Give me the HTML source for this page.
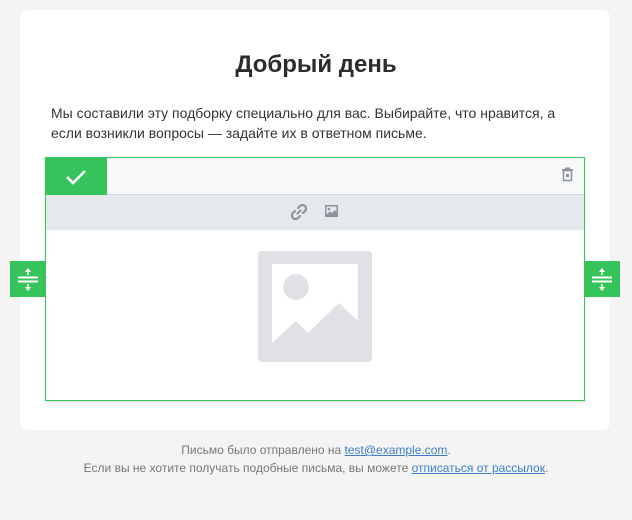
<!DOCTYPE html>
<html><head><meta charset="utf-8"><style>
*{margin:0;padding:0;box-sizing:border-box}
body{width:632px;height:520px;background:#f4f4f4;font-family:"Liberation Sans",Arial,sans-serif;position:relative;overflow:hidden}
.card{position:absolute;left:20px;top:10px;width:590px;height:420px;background:#fff;border-radius:8px}
h1{position:absolute;left:0;width:632px;top:51px;text-align:center;font-size:24px;font-weight:bold;color:#2c2c2c}
.p{position:absolute;left:51px;top:103px;width:515px;font-size:14px;line-height:20px;color:#333}
.blk{position:absolute;left:45px;top:157px;width:540px;height:244px;border:1px solid #37c35c;background:#fff;box-shadow:0 1px 2px rgba(0,0,0,.15)}
.hd{position:absolute;left:0;top:0;width:538px;height:37px;background:#f7f8fa;border-bottom:1px solid #d3d7dc}
.chk{position:absolute;left:0;top:0;width:61px;height:37px;background:#37c35c}
.tb{position:absolute;left:0;top:37px;width:538px;height:35px;background:#e6e9ec}
.hdl{position:absolute;top:261px;width:36px;height:36px;background:#37c35c}
.ft{position:absolute;left:0;width:632px;text-align:center;font-size:12px;color:#777;line-height:18px}
.ft a{color:#3c7fc7;text-decoration:underline}
</style></head><body>
<div class="card"></div>
<h1>Добрый день</h1>
<div class="p">Мы составили эту подборку специально для вас. Выбирайте, что нравится, а если возникли вопросы — задайте их в ответном письме.</div>
<div class="blk">
 <div class="hd">
  <div class="chk"><svg width="61" height="37"><path d="M21 19 L27 25 L39 13" stroke="#fff" stroke-width="2.5" fill="none"/></svg></div>
  <svg style="position:absolute;left:516px;top:9px" width="12" height="16"><rect x="1.5" y="3.5" width="8" height="10" fill="none" stroke="#8a93a0" stroke-width="1.5"/><rect x="0" y="2" width="11" height="1.5" fill="#8a93a0"/><rect x="3" y="0.5" width="5" height="1.5" fill="#8a93a0"/><rect x="4" y="7" width="3" height="3" fill="#8a93a0"/></svg>
 </div>
 <div class="tb">
  <svg style="position:absolute;left:244px;top:8px" width="18" height="18" viewBox="0 0 18 18"><g fill="none" stroke="#8a93a0" stroke-width="2.2" stroke-linecap="round"><path d="M7.5 10.5 L10.5 7.5"/><path d="M8 5 L10 3 a3 3 0 0 1 5 5 L13 10"/><path d="M10 13 L8 15 a3 3 0 0 1 -5 -5 L5 8"/></g></svg>
  <svg style="position:absolute;left:279px;top:10px" width="13" height="12"><rect width="13" height="12" fill="#8a93a0"/><rect x="1.5" y="1.5" width="10" height="8" fill="#e6e9ec"/><circle cx="4" cy="4" r="1.3" fill="#8a93a0"/><path d="M1.5 9.5 L5 6.5 L7 8 L10 5 L11.5 6.5 L11.5 9.5Z" fill="#8a93a0"/></svg>
 </div>
 <svg style="position:absolute;left:212px;top:93px" width="114" height="111"><rect x="0" y="0" width="114" height="111" rx="4" fill="#dfe1e5"/><rect x="14" y="13" width="86" height="84" fill="#fff"/><circle cx="38" cy="36" r="13" fill="#dfe1e5"/><path d="M14 92 L38 70 L50 82 L81 52 L100 70 L100 98 L14 98Z" fill="#dfe1e5"/></svg>
</div>
<div class="hdl" style="left:10px"><svg width="36" height="36"><g stroke="#fff" stroke-width="2" fill="#fff"><path d="M8 16.5 H28 M8 20.5 H28" fill="none"/><path d="M18 8 V14 M18 23 V29" fill="none" stroke-width="1.5"/></g><path d="M15 11 L18 7 L21 11Z M15 26 L18 30 L21 26Z" fill="#fff"/></svg></div>
<div class="hdl" style="left:584px"><svg width="36" height="36"><g stroke="#fff" stroke-width="2" fill="#fff"><path d="M8 16.5 H28 M8 20.5 H28" fill="none"/><path d="M18 8 V14 M18 23 V29" fill="none" stroke-width="1.5"/></g><path d="M15 11 L18 7 L21 11Z M15 26 L18 30 L21 26Z" fill="#fff"/></svg></div>
<div class="ft" style="top:441px">Письмо было отправлено на <a>test@example.com</a>.</div>
<div class="ft" style="top:459px">Если вы не хотите получать подобные письма, вы можете <a>отписаться от рассылок</a>.</div>
</body></html>
